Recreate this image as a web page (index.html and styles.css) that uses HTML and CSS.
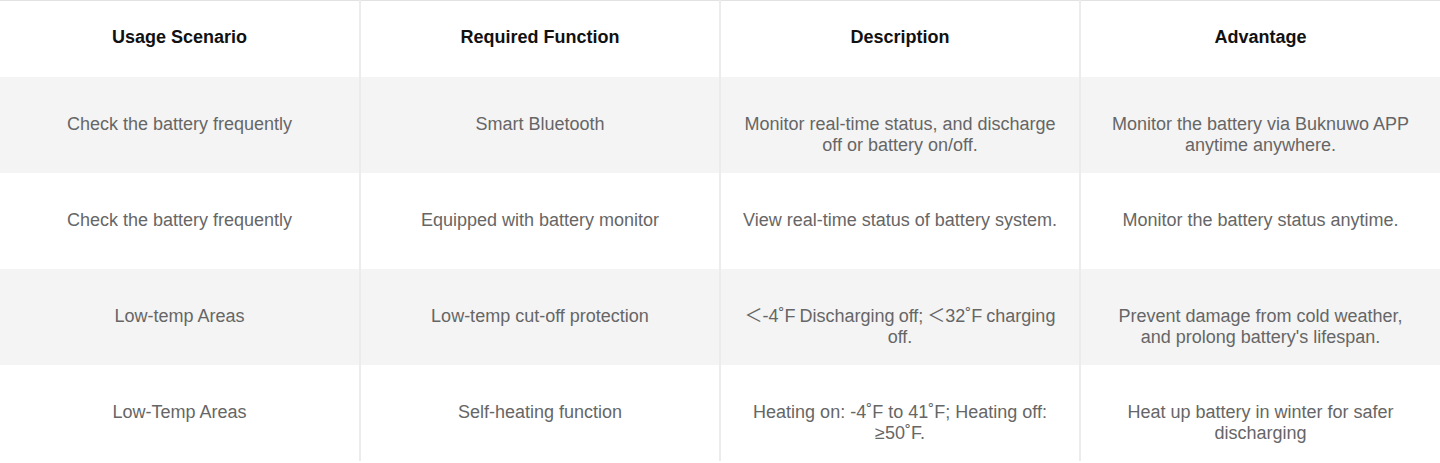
FILE: index.html
```html
<!DOCTYPE html>
<html>
<head>
<meta charset="utf-8">
<link rel="stylesheet" href="styles.css">
</head>
<body>
<table class="spec">
  <colgroup><col class="c"><col class="c"><col class="c"><col class="c"></colgroup>
  <thead>
    <tr>
      <th>Usage Scenario</th>
      <th>Required Function</th>
      <th>Description</th>
      <th>Advantage</th>
    </tr>
  </thead>
  <tbody>
    <tr class="alt">
      <td>Check the battery frequently</td>
      <td>Smart Bluetooth</td>
      <td>Monitor real-time status, and discharge off or battery on/off.</td>
      <td>Monitor the battery via Buknuwo APP anytime anywhere.</td>
    </tr>
    <tr>
      <td>Check the battery frequently</td>
      <td>Equipped with battery monitor</td>
      <td>View real-time status of battery system.</td>
      <td>Monitor the battery status anytime.</td>
    </tr>
    <tr class="alt">
      <td>Low-temp Areas</td>
      <td>Low-temp cut-off protection</td>
      <td class="tight"><span class="cjk">＜</span>-4˚F Discharging off; <span class="cjk">＜</span>32˚F charging off.</td>
      <td>Prevent damage from cold weather, and prolong battery's lifespan.</td>
    </tr>
    <tr>
      <td>Low-Temp Areas</td>
      <td>Self-heating function</td>
      <td>Heating on: -4˚F to 41˚F; Heating off: ≥50˚F.</td>
      <td>Heat up battery in winter for safer discharging</td>
    </tr>
  </tbody>
</table>
</body>
</html>
```
FILE: styles.css
```css
html, body {
  margin: 0;
  padding: 0;
  background: #fff;
}
body {
  font-family: "Liberation Sans", Arial, sans-serif;
}
.spec {
  width: 1440px;
  border-collapse: collapse;
  table-layout: fixed;
  border-top: 1px solid #e2e2e2;
}
.spec .c {
  width: 360px;
}
.spec th,
.spec td {
  text-align: center;
  padding: 0 21px;
  border-left: 2px solid #ececec;
  font-size: 18px;
  line-height: 21px;
}
.spec th:first-child,
.spec td:first-child {
  border-left: none;
}
.spec th {
  height: 72px;
  padding-bottom: 4px;
  vertical-align: middle;
  font-weight: bold;
  color: #111;
}
.spec td {
  height: 59px;
  padding-top: 37px;
  vertical-align: top;
  color: #666;
}
.spec tr.alt td {
  background: #f4f4f4;
}
.spec td.tight {
  word-spacing: -1px;
}
.cjk {
  font-family: "Noto Sans CJK SC", sans-serif;
  font-weight: 400;
  line-height: 0;
}
```
